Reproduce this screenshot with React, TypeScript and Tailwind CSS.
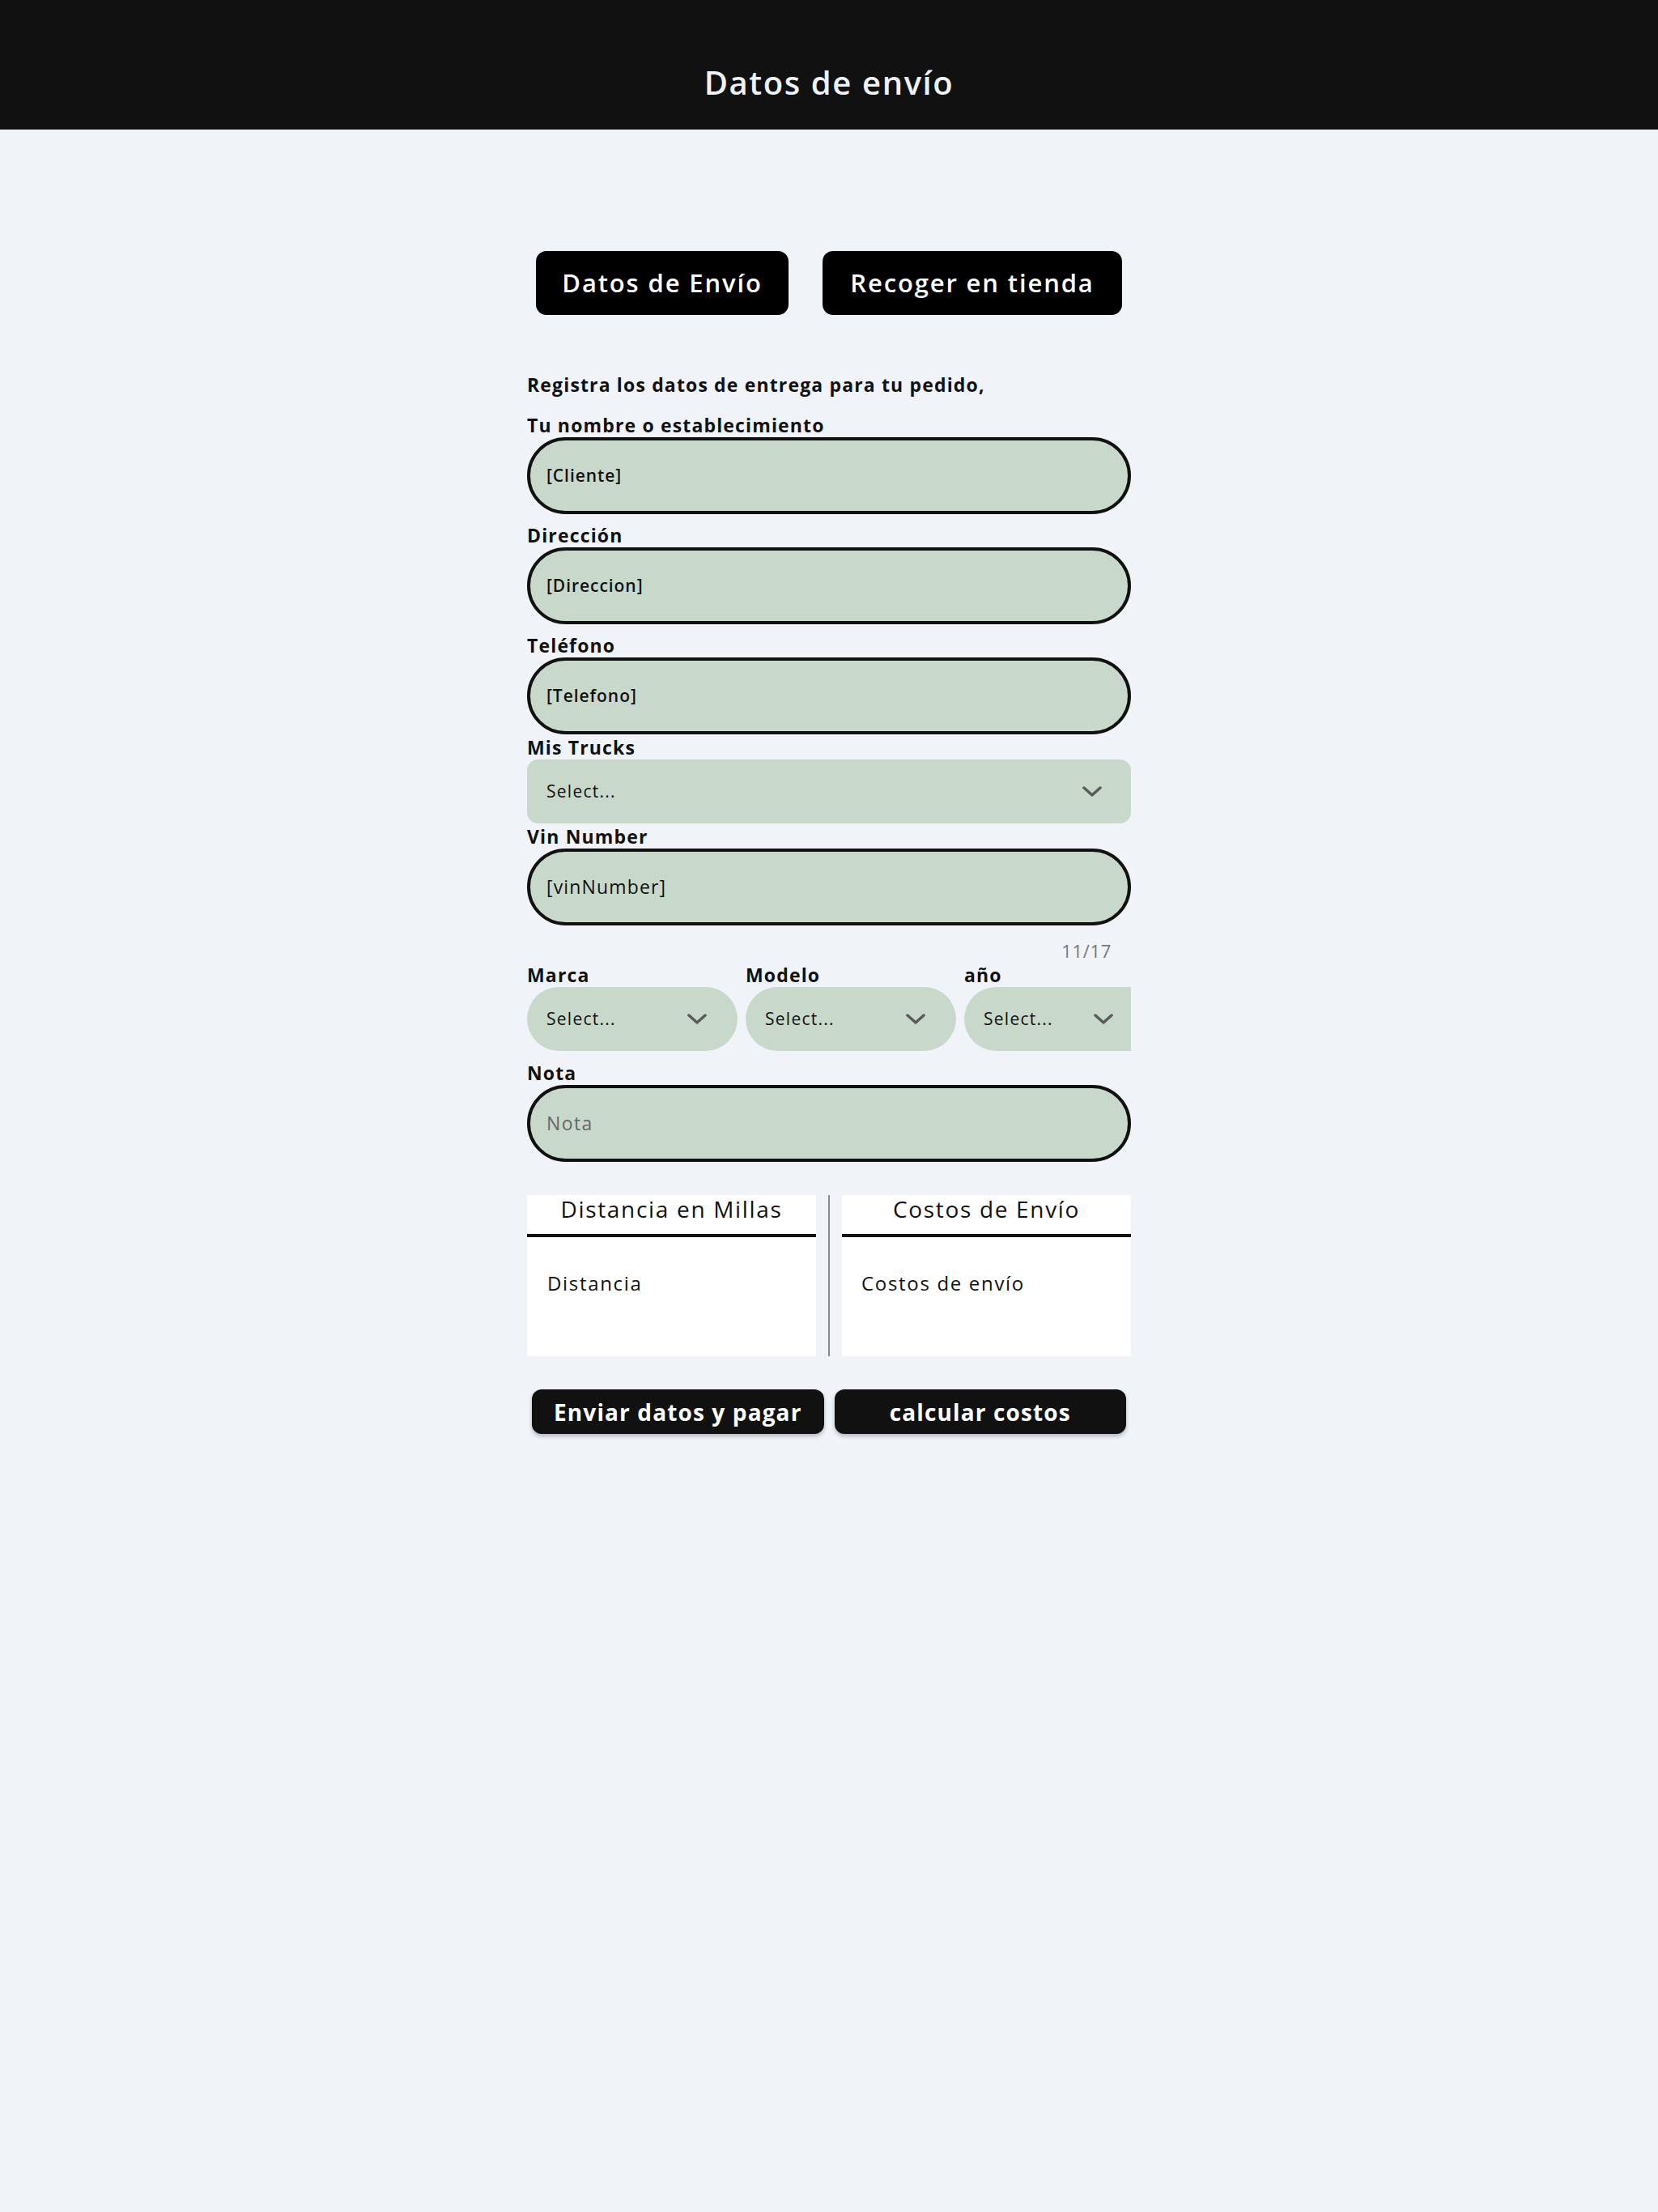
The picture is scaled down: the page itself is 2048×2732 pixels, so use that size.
const Chevron = () => (
  <svg width="24" height="14" viewBox="0 0 24 14" fill="none" className="shrink-0">
    <polyline points="2,2 12,11 22,2" stroke="#5a5a5a" strokeWidth="3.5" strokeLinecap="round" strokeLinejoin="round" />
  </svg>
);

const Label = ({ children, className = "" }: { children: React.ReactNode; className?: string }) => (
  <label className={"block text-[23px] leading-[30px] font-bold tracking-[0.05em] text-[#111] " + className}>
    {children}
  </label>
);

const TextBox = ({ value, placeholder = false, big = false }: { value: string; placeholder?: boolean; big?: boolean }) => (
  <div className="h-[95px] w-full rounded-full border-4 border-[#111] bg-[#c8d9cb] pl-[20px] flex items-center">
    <span
      className={
        placeholder
          ? "text-[23px] tracking-[0.06em] text-[#666]"
          : big
          ? "text-[23px] font-medium tracking-[0.05em] text-[#111]"
          : "text-[21px] font-semibold tracking-[0.045em] text-[#111]"
      }
    >
      {value}
    </span>
  </div>
);

const SelectBox = ({ className, pr }: { className: string; pr: string }) => (
  <div className={"h-[79px] bg-[#c8d9cb] pl-[24px] flex items-center justify-between " + pr + " " + className}>
    <span className="text-[21px] font-medium tracking-[0.06em]">Select...</span>
    <Chevron />
  </div>
);

const App: React.FC = () => {
  return (
    <div className="min-h-screen w-full bg-[#f0f4f9] font-['Open_Sans',sans-serif] text-[#111]">
      {/* Header */}
      <header className="h-[160px] w-full bg-[#111] flex items-end justify-center pb-[32px]">
        <h1 className="text-[40px] leading-[52px] font-semibold tracking-[0.04em] text-[#eef2f7]">Datos de envío</h1>
      </header>

      <main className="flex flex-col items-center pt-[150px] pb-20">
        {/* Tabs */}
        <div className="flex gap-[42px]">
          <button className="h-[79px] w-[312px] rounded-[13px] bg-black text-white text-[31px] font-semibold tracking-[0.06em]">
            Datos de Envío
          </button>
          <button className="h-[79px] w-[370px] rounded-[13px] bg-black text-white text-[31px] font-semibold tracking-[0.06em]">
            Recoger en tienda
          </button>
        </div>

        {/* Form */}
        <div className="w-[746px] mt-[71px]">
          <p className="text-[23px] leading-[30px] font-bold tracking-[0.05em]">Registra los datos de entrega para tu pedido,</p>

          <Label className="mt-[20px]">Tu nombre o establecimiento</Label>
          <TextBox value="[Cliente]" />

          <Label className="mt-[11px]">Dirección</Label>
          <TextBox value="[Direccion]" />

          <Label className="mt-[11px]">Teléfono</Label>
          <TextBox value="[Telefono]" />

          <Label className="mt-[1px]">Mis Trucks</Label>
          <SelectBox className="w-full rounded-[14px]" pr="pr-[36px]" />

          <Label className="mt-[1px]">Vin Number</Label>
          <TextBox value="[vinNumber]" big />
          <div className="mt-[16px] pr-[24px] text-right text-[22px] leading-[30px] tracking-[0.03em] text-[#777]">11/17</div>

          {/* Marca / Modelo / año */}
          <div className="flex gap-[10px] overflow-hidden">
            <div className="w-[260px] shrink-0">
              <Label>Marca</Label>
              <SelectBox className="rounded-full" pr="pr-[38px]" />
            </div>
            <div className="w-[260px] shrink-0">
              <Label>Modelo</Label>
              <SelectBox className="rounded-full" pr="pr-[38px]" />
            </div>
            <div className="w-[206px] shrink-0">
              <Label>año</Label>
              <SelectBox className="rounded-l-full rounded-r-[22px]" pr="pr-[22px]" />
            </div>
          </div>

          <Label className="mt-[12px]">Nota</Label>
          <TextBox value="Nota" placeholder />

          {/* Distance / cost cards */}
          <div className="mt-[41px] flex gap-[15px] h-[199px]">
            <div className="flex-1 bg-white flex flex-col">
              <div className="h-[52px] border-b-4 border-[#111] flex items-start justify-center pt-[3px]">
                <span className="text-[28px] leading-none font-medium tracking-[0.06em]">Distancia en Millas</span>
              </div>
              <div className="pl-[25px] pt-[41px] text-[24px] leading-[32px] tracking-[0.07em]">Distancia</div>
            </div>
            <div className="w-[2px] bg-[#8a8a8a]" />
            <div className="flex-1 bg-white flex flex-col">
              <div className="h-[52px] border-b-4 border-[#111] flex items-start justify-center pt-[3px]">
                <span className="text-[28px] leading-none font-medium tracking-[0.06em]">Costos de Envío</span>
              </div>
              <div className="pl-[24px] pt-[41px] text-[24px] leading-[32px] tracking-[0.07em]">Costos de envío</div>
            </div>
          </div>

          {/* Actions */}
          <div className="mt-[41px] px-[6px] flex gap-[13px]">
            <button className="flex-1 h-[55px] rounded-[12px] bg-[#111] text-white text-[28px] font-bold tracking-[0.04em] shadow-[0_3px_5px_rgba(0,0,0,0.25)]">
              Enviar datos y pagar
            </button>
            <button className="flex-1 h-[55px] rounded-[12px] bg-[#111] text-white text-[28px] font-bold tracking-[0.04em] shadow-[0_3px_5px_rgba(0,0,0,0.25)]">
              calcular costos
            </button>
          </div>
        </div>
      </main>
    </div>
  );
};

export default App;
